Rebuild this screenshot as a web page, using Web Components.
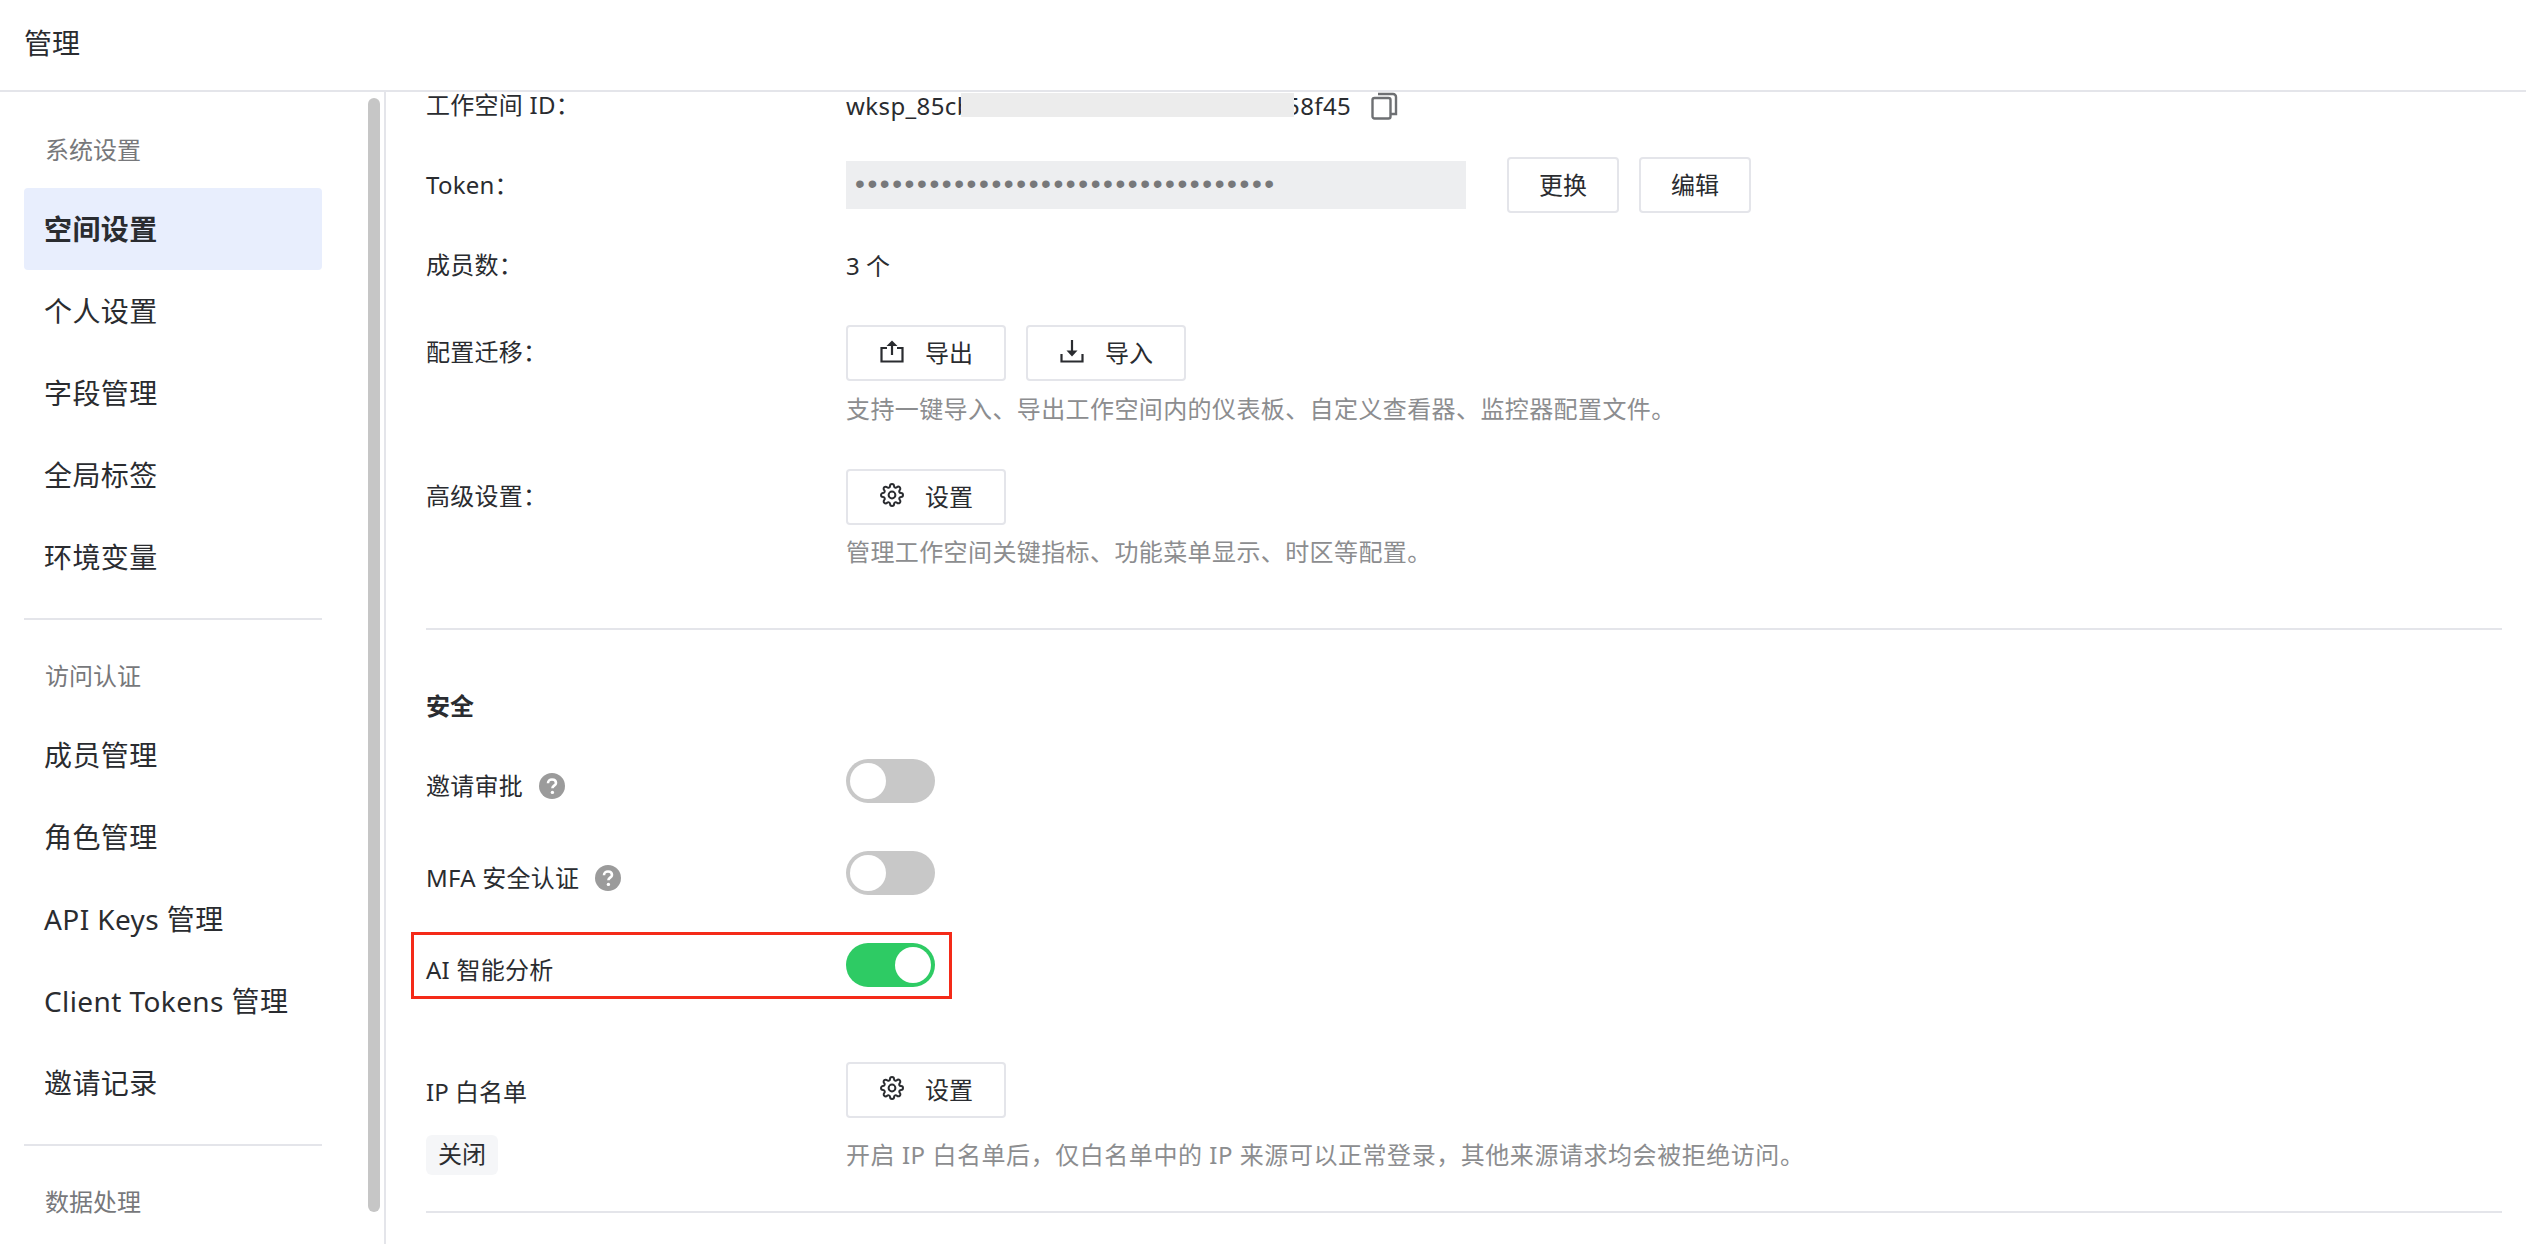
<!DOCTYPE html>
<html lang="zh-CN"><head><meta charset="utf-8"><title>管理</title>
<style>
html,body{margin:0;height:100%;overflow:hidden;background:#fff}
body{font-family:"Noto Sans","Noto Sans CJK SC",sans-serif;color:#2a2c30;font-size:24px}
</style></head><body>
<app-shell>
  <top-bar slot="top">管理</top-bar>
  <side-nav slot="side">
    <nav-group label="系统设置">
      <nav-item active>空间设置</nav-item><nav-item>个人设置</nav-item><nav-item>字段管理</nav-item><nav-item>全局标签</nav-item><nav-item>环境变量</nav-item>
    </nav-group>
    <nav-group label="访问认证">
      <nav-item>成员管理</nav-item><nav-item>角色管理</nav-item><nav-item>API Keys 管理</nav-item><nav-item>Client Tokens 管理</nav-item><nav-item>邀请记录</nav-item>
    </nav-group>
    <nav-group label="数据处理" last></nav-group>
  </side-nav>
  <settings-page slot="main"></settings-page>
</app-shell>
<script>
const FONT='"Noto Sans","Noto Sans CJK SC",sans-serif';
const GEAR='<svg width="24" height="24" viewBox="0 0 24 24" fill="none" stroke="currentColor" stroke-width="2" stroke-linecap="round" stroke-linejoin="round"><circle cx="12" cy="12" r="3.4"/><path d="M19.4 15a1.65 1.65 0 0 0 .33 1.82l.06.06a2 2 0 0 1 0 2.83 2 2 0 0 1-2.83 0l-.06-.06a1.65 1.65 0 0 0-1.82-.33 1.65 1.65 0 0 0-1 1.51V21a2 2 0 0 1-2 2 2 2 0 0 1-2-2v-.09A1.65 1.65 0 0 0 9 19.4a1.65 1.65 0 0 0-1.82.33l-.06.06a2 2 0 0 1-2.83 0 2 2 0 0 1 0-2.83l.06-.06a1.65 1.65 0 0 0 .33-1.82 1.65 1.65 0 0 0-1.51-1H3a2 2 0 0 1-2-2 2 2 0 0 1 2-2h.09A1.65 1.65 0 0 0 4.6 9a1.65 1.65 0 0 0-.33-1.82l-.06-.06a2 2 0 0 1 0-2.83 2 2 0 0 1 2.83 0l.06.06a1.65 1.65 0 0 0 1.82.33H9a1.65 1.65 0 0 0 1-1.51V3a2 2 0 0 1 2-2 2 2 0 0 1 2 2v.09a1.65 1.65 0 0 0 1 1.51 1.65 1.65 0 0 0 1.82-.33l.06-.06a2 2 0 0 1 2.83 0 2 2 0 0 1 0 2.83l-.06.06a1.65 1.65 0 0 0-.33 1.82V9a1.65 1.65 0 0 0 1.51 1H21a2 2 0 0 1 2 2 2 2 0 0 1-2 2h-.09a1.65 1.65 0 0 0-1.51 1z"/></svg>';
const UP='<svg width="24" height="24" viewBox="0 0 24 24" fill="none" stroke="currentColor" stroke-width="2.2"><path d="M7 9H1.500v13.500h21V9H17"/><path d="M12 16V3"/><path d="M6.500 7 12 1.500 17.500 7z" fill="currentColor" stroke-width="0"/></svg>';
const DOWN='<svg width="24" height="24" viewBox="0 0 24 24" fill="none" stroke="currentColor" stroke-width="2.2"><path d="M1.500 15v7.500h21V15"/><path d="M12 1v12"/><path d="M6.500 11.500h11L12 17.500z" fill="currentColor" stroke-width="0"/></svg>';

function def(name,css,html){
  customElements.define(name,class extends HTMLElement{
    constructor(){super();this.attachShadow({mode:'open'}).innerHTML='<style>'+css+'</style>'+(typeof html==='function'?html(this):html);}
  });
}
def('app-shell',`:host{display:grid;grid-template-rows:92px 1fr;grid-template-columns:386px 1fr;height:100vh;overflow:hidden}
.t{grid-column:1/3;display:block}.s,.m{display:block;min-height:0;min-width:0}.s{overflow:hidden}`,
`<div class="t"><slot name="top"></slot></div><div class="s"><slot name="side"></slot></div><div class="m"><slot name="main"></slot></div>`);
def('top-bar',`:host{display:flex;align-items:center;height:92px;box-sizing:border-box;padding:0 24px 6px;border-bottom:2px solid #e4e5ea;font-size:28px;background:#fff}`,`<slot></slot>`);
def('side-nav',`:host{display:block;position:relative;height:100%;box-sizing:border-box;border-right:2px solid #e4e5ea;padding:38px 62px 0 24px;overflow:hidden}
.thumb{position:absolute;left:368px;top:6px;width:12px;height:1114px;border-radius:6px;background:#c6c6c6}`,`<slot></slot><div class="thumb"></div>`);
def('nav-group',`:host{display:block}
.l{height:40px;line-height:40px;font-size:24px;color:#77787b;padding-left:21px;margin-bottom:18px}
.d{height:2px;background:#e4e5ea;margin:20px 0 36px}
:host([last]) .d{display:none}`,h=>`<div class="l">${h.getAttribute('label')}</div><slot></slot><div class="d"></div>`);
def('nav-item',`:host{display:block;height:82px;line-height:82px;padding-left:20px;font-size:28px;border-radius:4px;color:#2a2c30;letter-spacing:.4px}
:host([active]){background:#e8eefd;font-weight:700}`,`<slot></slot>`);
def('ui-btn',`:host{display:inline-flex;align-items:center;justify-content:center;height:56px;box-sizing:border-box;border:2px solid #e4e5ea;border-radius:4px;padding:0 31px 0 32px;gap:21px;font-size:24px;background:#fff;color:#2a2c30}
:host([plain]){padding:0 30px}
.t{display:block;margin-top:-3px}
::slotted(svg){display:block}`,`<slot name="icon"></slot><span class="t"><slot></slot></span>`);
def('ui-toggle',`:host{display:block;width:89px;height:44px;border-radius:22px;background:#c8c8c8;position:relative;flex:none}
.k{position:absolute;left:4px;top:4px;width:36px;height:36px;border-radius:50%;background:#fff}
:host([on]){background:#2ecb64}
:host([on]) .k{left:49px}`,`<div class="k"></div>`);
def('help-icon',`:host{display:inline-block;width:26px;height:26px;margin:3px 0 0 16px;flex:none}svg{display:block}`,
`<svg width="26" height="26" viewBox="0 0 26 26"><circle cx="13" cy="13" r="13" fill="#9b9b9b"/><path d="M9 10.200c0-2.300 1.800-3.700 4-3.700s4 1.300 4 3.400c0 2.700-3.600 2.800-3.600 5.300" fill="none" stroke="#fff" stroke-width="2.600"/><circle cx="13.400" cy="19.400" r="1.700" fill="#fff"/></svg>`);
def('form-row',`:host{display:flex;align-items:center;position:relative;min-height:56px}
.l{width:420px;flex:none;display:flex;align-items:center;font-size:24px;color:#2a2c30;letter-spacing:.25px;padding-bottom:5px;box-sizing:border-box}
.v{flex:1;min-width:0;display:flex;align-items:center;gap:20px}`,`<div class="l"><slot name="label"></slot></div><div class="v"><slot></slot></div>`);
def('ui-hint',`:host{display:block;margin:10px 0 0 420px;font-size:24px;line-height:36px;color:#8c8d8f;letter-spacing:.4px}`,`<slot></slot>`);
def('ui-tag',`:host{display:inline-block;height:40px;line-height:38px;box-sizing:border-box;padding:0 12px;background:#f5f6f8;border-radius:6px;font-size:24px}`,`<slot></slot>`);
def('settings-page',`:host{display:block;font-family:${FONT}}
.c{margin-top:-15px;padding:0 24px 0 40px}
.id{display:inline-flex;align-items:center;white-space:nowrap;letter-spacing:.4px}
.pre{display:block;width:115px}
.mask{display:block;width:333px;height:24px;background:#ececec;position:relative;z-index:1}
.suf{display:block;margin-left:-8px}
.copy{display:block;margin-top:2px}
.tk{width:620px;height:48px;background:#edeef0;color:#77787a;display:flex;align-items:center;padding:0 0 2px 9px;font-size:28px;letter-spacing:2.6px;overflow:hidden;margin-right:21px;line-height:46px;font-family:"Liberation Sans",sans-serif;box-sizing:border-box}
.r2{margin-top:24px}.r3{margin-top:25px}.r4{margin-top:31px}.r5{margin-top:42px}
.lat{display:block;padding-top:2px}
.h2{margin-top:9px}
.num{padding-bottom:4px}
hr{border:0;height:2px;background:#e4e5ea;margin:58px 0 0}
h3{margin:58px 0 11px;font-size:24px;line-height:36px;font-weight:700}
.t{height:92px;min-height:92px}
.lab{display:flex;align-items:center;padding-top:12px}
.red{position:absolute;left:-15px;top:13px;width:535px;height:61px;border:3px solid #f42a18;pointer-events:none}
.ip{display:flex;margin-top:51px;height:113px}
.ipl{width:420px;flex:none}.ipn{height:56px;display:flex;align-items:center;margin-bottom:17px}
.ipr{flex:1}.ipr ui-hint{margin:19px 0 0 0;letter-spacing:.55px}
hr.e{margin-top:36px}`,
`<div class="c">
<form-row><span slot="label" class="lat">工作空间 ID：</span><span class="id"><span class="pre">wksp_85cb</span><span class="mask"></span><span class="suf">58f45</span></span>
<svg class="copy" width="27" height="28" viewBox="0 0 27 28" fill="none" stroke="#6e7073" stroke-width="2.400"><rect x="1.500" y="6" width="18" height="20.500" rx="2"/><path d="M7 2h15a3 3 0 0 1 3 3v17h-5"/></svg></form-row>
<form-row class="r2"><span slot="label" class="lat">Token：</span><div class="tk">••••••••••••••••••••••••••••••••••</div><ui-btn plain>更换</ui-btn><ui-btn plain>编辑</ui-btn></form-row>
<form-row class="r3"><span slot="label">成员数：</span><span class="num">3 个</span></form-row>
<form-row class="r4"><span slot="label">配置迁移：</span><ui-btn><span slot="icon">${UP}</span>导出</ui-btn><ui-btn><span slot="icon">${DOWN}</span>导入</ui-btn></form-row>
<ui-hint>支持一键导入、导出工作空间内的仪表板、自定义查看器、监控器配置文件。</ui-hint>
<form-row class="r5"><span slot="label">高级设置：</span><ui-btn><span slot="icon">${GEAR}</span>设置</ui-btn></form-row>
<ui-hint class="h2">管理工作空间关键指标、功能菜单显示、时区等配置。</ui-hint>
<hr>
<h3>安全</h3>
<form-row class="t"><span slot="label" class="lab">邀请审批<help-icon></help-icon></span><ui-toggle></ui-toggle></form-row>
<form-row class="t"><span slot="label" class="lab">MFA 安全认证<help-icon></help-icon></span><ui-toggle></ui-toggle></form-row>
<form-row class="t"><span slot="label" class="lab">AI 智能分析</span><ui-toggle on></ui-toggle><div class="red"></div></form-row>
<div class="ip"><div class="ipl"><div class="ipn">IP 白名单</div><ui-tag>关闭</ui-tag></div>
<div class="ipr"><ui-btn><span slot="icon">${GEAR}</span>设置</ui-btn><ui-hint>开启 IP 白名单后，仅白名单中的 IP 来源可以正常登录，其他来源请求均会被拒绝访问。</ui-hint></div></div>
<hr class="e">
</div>`);
</script>
</body></html>
